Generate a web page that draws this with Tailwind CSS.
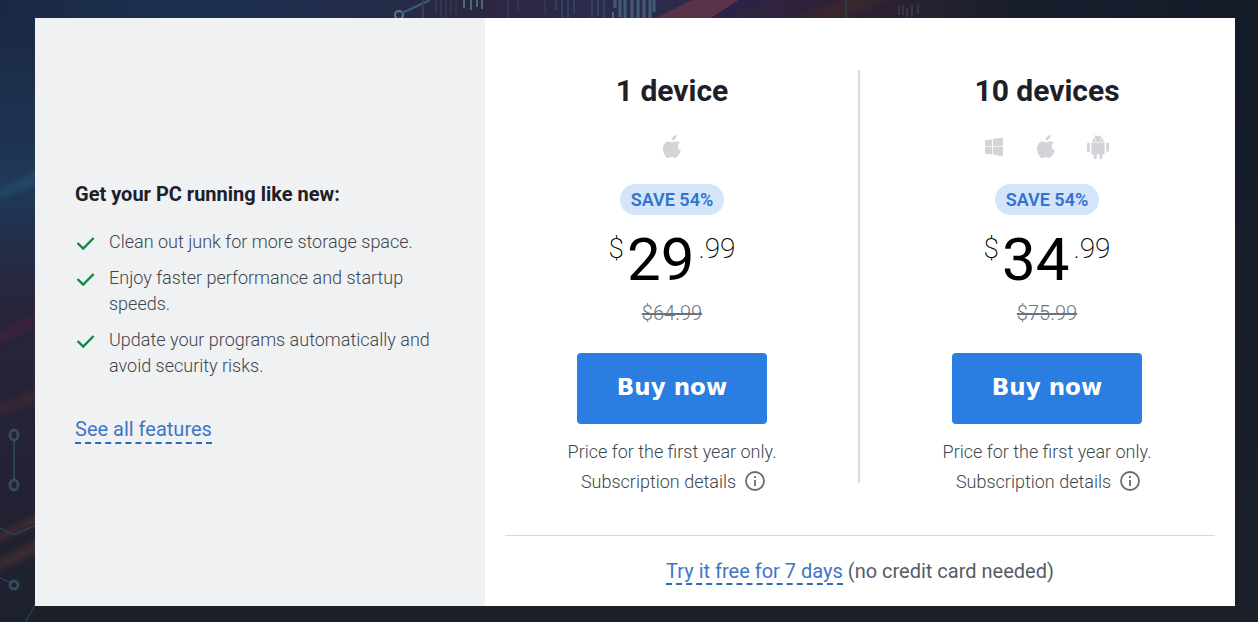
<!DOCTYPE html>
<html lang="en">
<head>
  <meta charset="UTF-8">
  <meta name="viewport" content="width=device-width, initial-scale=1.0">
  <title>Choose your plan</title>
  <script src="https://cdn.jsdelivr.net/npm/@tailwindcss/browser@4"></script>
</head>
<body class="relative min-h-screen bg-[#1b1f2b] pt-[18px] pr-[23px] pb-4 pl-[35px] font-['Roboto',sans-serif] text-[#3c464d]">

  <!-- Circuit board backdrop -->
  <svg class="absolute inset-0 w-full h-full" viewBox="0 0 1258 622" preserveAspectRatio="none" aria-hidden="true">
    <defs>
      <linearGradient id="top" x1="0" x2="1" y1="0" y2="0">
        <stop offset="0" stop-color="#1a2943"/>
        <stop offset="0.15" stop-color="#1d3050"/>
        <stop offset="0.28" stop-color="#222d4b"/>
        <stop offset="0.38" stop-color="#2c2640"/>
        <stop offset="0.5" stop-color="#2c2c50"/>
        <stop offset="0.6" stop-color="#30233f"/>
        <stop offset="0.7" stop-color="#2c2233"/>
        <stop offset="0.8" stop-color="#191e2d"/>
        <stop offset="1" stop-color="#141b29"/>
      </linearGradient>
      <linearGradient id="side" x1="0" x2="0" y1="0" y2="1">
        <stop offset="0" stop-color="#1a2943"/>
        <stop offset="0.2" stop-color="#1f3351"/>
        <stop offset="0.28" stop-color="#21395a"/>
        <stop offset="0.36" stop-color="#222f4b"/>
        <stop offset="0.48" stop-color="#29253b"/>
        <stop offset="0.6" stop-color="#262438"/>
        <stop offset="0.8" stop-color="#232133"/>
        <stop offset="1" stop-color="#1c222d"/>
      </linearGradient>
      <linearGradient id="right" x1="0" x2="0" y1="0" y2="1">
        <stop offset="0" stop-color="#141b29"/>
        <stop offset="1" stop-color="#1b202a"/>
      </linearGradient>
      <filter id="soft"><feGaussianBlur stdDeviation="3"/></filter>
      <filter id="fine"><feGaussianBlur stdDeviation="0.7"/></filter>
    </defs>
    <rect width="1258" height="18" fill="url(#top)"/>
    <rect y="18" width="35" height="604" fill="url(#side)"/>
    <rect x="1235" y="18" width="23" height="604" fill="url(#right)"/>
    <rect x="35" y="606" width="1200" height="16" fill="#1c202a"/>
    <g filter="url(#soft)">
      <path d="M-5 192L40 170V182L-5 200Z" fill="#244967"/>
      <path d="M-5 334L40 312V322L-5 346Z" fill="#3a2039"/>
      <path d="M-5 408L40 386V400L-5 416Z" fill="#392735"/>
      <path d="M-5 536L40 512V522L-5 544Z" fill="#402b33"/>
      <path d="M-5 562L40 538V552L-5 572Z" fill="#3e2b33"/>
      <path d="M790 20L850 -2H890L840 20Z" fill="#38252f"/>
    </g>
    <g filter="url(#fine)">
      <path d="M652 20L696 -2H742L708 20Z" fill="#5a3048"/>
      <path d="M742 -2L708 20H722L770 -2Z" fill="#292446"/>
      <path d="M0 528L14 535L36 525M0 578L12 583M26 621L36 603" fill="none" stroke="#344b5c"/>
      <path d="M14 441V480" stroke="#2c435a" stroke-width="2"/>
      <g fill="none" stroke="#364b5a" stroke-width="3">
        <ellipse cx="14" cy="435" rx="4" ry="5"/>
        <ellipse cx="14" cy="485" rx="4" ry="5"/>
        <ellipse cx="14" cy="585" rx="4" ry="4"/>
      </g>
      <circle cx="399" cy="15" r="4" fill="none" stroke="#557b8d" stroke-width="2"/>
      <path d="M402 13L430 0" stroke="#3a5b76" stroke-width="2"/>
      <path d="M436 0V14M441 0V17M446 0V18M451 0V14M456 0V18M508 0V18M518 0V12M545 0V14" stroke="#36425f"/>
      <path d="M423 0V18M556 0V10M562 0V18M568 0V18M574 0V14M592 0V18M598 0V16M604 0V18" stroke="#30405e" stroke-width="2"/>
      <path d="M615 0V8M620 0V17M625 0V18M632 0V18M638 0V18M644 0V18M650 0V18M654 0V12" stroke="#405d70" stroke-width="3"/>
      <path d="M464 0V8M471 0V10M477 0V7M482 0V9M613 12V18" stroke="#466c76" stroke-width="2"/>
      <path d="M899 6V15M903 5V15M907 8V17M912 5V17M918 4V14M846 0V18" stroke="#35384b" stroke-width="2"/>
    </g>
  </svg>

  <main class="relative flex bg-white">
    <section class="flex w-3/8 flex-col justify-center bg-[#f0f1f3] px-10">
      <h2 class="text-xl leading-7 font-bold text-[#1d2028]">Get your PC running like new:</h2>
      <ul class="mt-[21px] space-y-[10px] text-lg leading-[26px] font-light">
        <li class="flex gap-3">
          <svg class="mt-[3px] size-[22px] shrink-0" viewBox="0 0 22 22" fill="none" stroke="#148548" stroke-width="2.4"><path d="M2.5 11L8.2 16.5L18.6 6"/></svg>
          Clean out junk for more storage space.
        </li>
        <li class="flex gap-3">
          <svg class="mt-[3px] size-[22px] shrink-0" viewBox="0 0 22 22" fill="none" stroke="#148548" stroke-width="2.4"><path d="M2.5 11L8.2 16.5L18.6 6"/></svg>
          Enjoy faster performance and startup speeds.
        </li>
        <li class="flex gap-3">
          <svg class="mt-[3px] size-[22px] shrink-0" viewBox="0 0 22 22" fill="none" stroke="#148548" stroke-width="2.4"><path d="M2.5 11L8.2 16.5L18.6 6"/></svg>
          Update your programs automatically and avoid security risks.
        </li>
      </ul>
      <a href="#" class="mt-[37px] self-start border-b-2 border-dashed border-[#2d6cb5] text-xl leading-[26px] text-[#3f76c4]">See all features</a>
    </section>

    <section class="w-5/8 px-5 pt-[52px] pb-5">
      <div class="-mx-5 flex text-center">
        <div class="flex flex-1 flex-col items-center pr-px">
          <h3 class="mt-[3px] text-3xl leading-9 font-bold text-[#1d2028]">1 device</h3>
          <div class="mt-[25px] flex h-[26px] justify-center text-[#d3d4d8]">
            <svg class="size-[26px]" viewBox="0 0 26 26" fill="currentColor" role="img" aria-label="Mac"><path d="M17.6 1C17.8 3.8 15.4 6.6 12.7 6.5C12.5 3.9 15 1.2 17.6 1ZM20.9 8.7C17.8 10.7 18.2 15 21.8 16.4C20.8 19.2 18.8 23.4 16.4 23.8C15 24 14.4 22.9 12.7 22.9C11 22.9 10.4 24 9 24C6.4 23.9 4 18.7 4 14.6C4 10.1 6.8 7.4 9.6 7.4C11.1 7.4 12.1 8.3 13.2 8.3C14.3 8.3 15.4 7.2 17.3 7.2C18.8 7.2 20.1 7.9 20.9 8.7Z"/></svg>
          </div>
          <p class="mt-6 rounded-full bg-[#d5e4f9] px-[11px] py-[3px] text-lg leading-[25px] font-semibold text-[#2f74d2]">SAVE 54%</p>
          <p class="mt-4 flex h-[60px] items-start text-black">
            <span class="text-[28px] leading-9 font-extralight">$</span>
            <span class="ml-[3px] text-[60px] leading-[58px]">29</span>
            <span class="ml-1 text-[28px] leading-9 font-extralight">.99</span>
          </p>
          <p class="mt-2 text-xl leading-7 font-light text-[#6d7280] line-through">$64.99</p>
          <button type="button" class="mt-[26px] h-[71px] w-[190px] rounded bg-[#2a7de1] pb-0.5 font-['DejaVu_Sans',sans-serif] text-[23px] font-bold text-white">Buy now</button>
          <p class="mt-[13px] text-lg leading-[30px] font-light">Price for the first year only.</p>
          <button type="button" class="flex h-[30px] items-center gap-2 pl-[3px] text-lg leading-[30px] font-light">
            Subscription details
            <svg class="mb-[3px] size-[22px]" viewBox="0 0 22 22" fill="none" stroke="#646b73" stroke-width="1.8"><circle cx="11" cy="11" r="9"/><path d="M11 10V16M11 6V8"/></svg>
          </button>
        </div>

        <div class="-ml-0.5 mb-[14px] w-0.5 bg-[#d9dadd]"></div>

        <div class="flex flex-1 flex-col items-center pr-px">
          <h3 class="mt-[3px] text-3xl leading-9 font-bold text-[#1d2028]">10 devices</h3>
          <div class="mt-[25px] flex h-[26px] justify-center gap-[26px] pr-[3px] text-[#d3d4d8]">
            <svg class="size-[26px]" viewBox="0 0 26 26" fill="currentColor" role="img" aria-label="Windows"><path d="M4 6.2L11.1 5.2V12.2H4ZM12 5.1L22 3.5V12.2H12ZM4 13H11.1V20.4L4 19.4ZM12 13H22V22.5L12 20.6Z"/></svg>
            <svg class="size-[26px]" viewBox="0 0 26 26" fill="currentColor" role="img" aria-label="Mac"><path d="M17.6 1C17.8 3.8 15.4 6.6 12.7 6.5C12.5 3.9 15 1.2 17.6 1ZM20.9 8.7C17.8 10.7 18.2 15 21.8 16.4C20.8 19.2 18.8 23.4 16.4 23.8C15 24 14.4 22.9 12.7 22.9C11 22.9 10.4 24 9 24C6.4 23.9 4 18.7 4 14.6C4 10.1 6.8 7.4 9.6 7.4C11.1 7.4 12.1 8.3 13.2 8.3C14.3 8.3 15.4 7.2 17.3 7.2C18.8 7.2 20.1 7.9 20.9 8.7Z"/></svg>
            <svg class="size-[26px]" viewBox="0 0 26 26" fill="currentColor" role="img" aria-label="Android"><path d="M7.3 7.7C7.3 5.6 8.5 3.8 10.2 2.8L8.9 0.6L9.4 0.3L10.7 2.5C12.1 1.9 13.9 1.9 15.3 2.5L16.6 0.3L17.1 0.6L15.8 2.8C17.5 3.8 18.7 5.6 18.7 7.7ZM9.8 4.7V5.9H11V4.7ZM15 4.7V5.9H16.2V4.7ZM6.4 8.6H19.6V19C19.6 20.2 19 20.6 18 20.6H17.4V24C17.4 25.6 14.4 25.6 14.4 24V20.6H11.7V24C11.7 25.6 8.7 25.6 8.7 24V20.6H8C7 20.6 6.4 20.2 6.4 19ZM2 10C2 8.2 4.9 8.2 4.9 10V16.6C4.9 18.4 2 18.4 2 16.6ZM21.1 10C21.1 8.2 24 8.2 24 10V16.6C24 18.4 21.1 18.4 21.1 16.6Z"/></svg>
          </div>
          <p class="mt-6 rounded-full bg-[#d5e4f9] px-[11px] py-[3px] text-lg leading-[25px] font-semibold text-[#2f74d2]">SAVE 54%</p>
          <p class="mt-4 flex h-[60px] items-start text-black">
            <span class="text-[28px] leading-9 font-extralight">$</span>
            <span class="ml-[3px] text-[60px] leading-[58px]">34</span>
            <span class="ml-1 text-[28px] leading-9 font-extralight">.99</span>
          </p>
          <p class="mt-2 text-xl leading-7 font-light text-[#6d7280] line-through">$75.99</p>
          <button type="button" class="mt-[26px] h-[71px] w-[190px] rounded bg-[#2a7de1] pb-0.5 font-['DejaVu_Sans',sans-serif] text-[23px] font-bold text-white">Buy now</button>
          <p class="mt-[13px] text-lg leading-[30px] font-light">Price for the first year only.</p>
          <button type="button" class="flex h-[30px] items-center gap-2 pl-[3px] text-lg leading-[30px] font-light">
            Subscription details
            <svg class="mb-[3px] size-[22px]" viewBox="0 0 22 22" fill="none" stroke="#646b73" stroke-width="1.8"><circle cx="11" cy="11" r="9"/><path d="M11 10V16M11 6V8"/></svg>
          </button>
        </div>
      </div>

      <p class="mt-[38px] border-t border-[#d9dadd] pt-[21px] pb-px text-center text-xl leading-7 text-[#555d64]">
        <a href="#" class="border-b-2 border-dashed border-[#2d6cb5] text-[#3f76c4]">Try it free for 7 days</a>
        (no credit card needed)
      </p>
    </section>
  </main>
</body>
</html>
